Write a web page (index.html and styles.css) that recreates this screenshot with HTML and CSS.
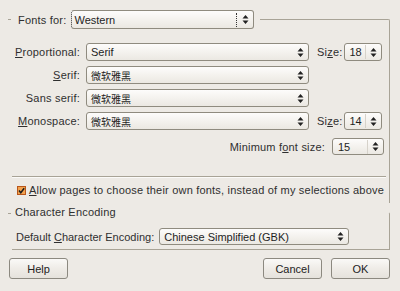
FILE: index.html
```html
<!DOCTYPE html>
<html lang="en">
<head>
    <meta charset="UTF-8">
    <title>Fonts</title>
    <link rel="stylesheet" href="styles.css">
</head>
<body>

    <div class="dialog">
        <div class="frame">
            <div class="frame-head">
                <span class="tick"></span>
                <span class="head-label">Fonts for:</span>
                <div class="combo combo-western">
                    <span class="combo-text">Western</span>
                    <span class="focus-line"></span>
                    <svg class="arrows" width="7" height="9" viewBox="0 0 7 9"><path d="M3.5 0L6.5 3.5H0.5Z M3.5 9L6.5 5.5H0.5Z" fill="#222"/></svg>
                </div>
                <span class="head-line"></span>
            </div>
            <div class="frame-body">
                <div class="rows">
                    <div class="row">
                        <span class="lbl"><u>P</u>roportional:</span>
                        <div class="combo wide"><span class="combo-text">Serif</span><svg class="arrows" width="7" height="9" viewBox="0 0 7 9"><path d="M3.5 0L6.5 3.5H0.5Z M3.5 9L6.5 5.5H0.5Z" fill="#222"/></svg></div>
                        <span class="size-lbl">Si<u>z</u>e:</span>
                        <div class="combo size"><span class="combo-text">18</span><span class="sep-v"></span><svg class="arrows" width="7" height="9" viewBox="0 0 7 9"><path d="M3.5 0L6.5 3.5H0.5Z M3.5 9L6.5 5.5H0.5Z" fill="#222"/></svg></div>
                    </div>
                    <div class="row">
                        <span class="lbl"><u>S</u>erif:</span>
                        <div class="combo wide"><span class="combo-text cjk">微软雅黑</span><svg class="arrows" width="7" height="9" viewBox="0 0 7 9"><path d="M3.5 0L6.5 3.5H0.5Z M3.5 9L6.5 5.5H0.5Z" fill="#222"/></svg></div>
                    </div>
                    <div class="row">
                        <span class="lbl">Sans serif:</span>
                        <div class="combo wide"><span class="combo-text cjk">微软雅黑</span><svg class="arrows" width="7" height="9" viewBox="0 0 7 9"><path d="M3.5 0L6.5 3.5H0.5Z M3.5 9L6.5 5.5H0.5Z" fill="#222"/></svg></div>
                    </div>
                    <div class="row">
                        <span class="lbl"><u>M</u>onospace:</span>
                        <div class="combo wide"><span class="combo-text cjk">微软雅黑</span><svg class="arrows" width="7" height="9" viewBox="0 0 7 9"><path d="M3.5 0L6.5 3.5H0.5Z M3.5 9L6.5 5.5H0.5Z" fill="#222"/></svg></div>
                        <span class="size-lbl">Si<u>z</u>e:</span>
                        <div class="combo size"><span class="combo-text">14</span><span class="sep-v"></span><svg class="arrows" width="7" height="9" viewBox="0 0 7 9"><path d="M3.5 0L6.5 3.5H0.5Z M3.5 9L6.5 5.5H0.5Z" fill="#222"/></svg></div>
                    </div>
                </div>

                <div class="min-row">
                    <span class="min-lbl">Minimum f<u>o</u>nt size:</span>
                    <div class="combo min"><span class="combo-text">15</span><span class="sep-v"></span><svg class="arrows" width="7" height="9" viewBox="0 0 7 9"><path d="M3.5 0L6.5 3.5H0.5Z M3.5 9L6.5 5.5H0.5Z" fill="#222"/></svg></div>
                </div>

                <div class="sep"></div>

                <div class="check-row">
                    <svg class="check" width="9" height="9" viewBox="0 0 9 9">
                        <rect x="0.5" y="0.5" width="8" height="8" fill="#f2a24e" stroke="#b8561a"/>
                        <path d="M2 4.5L3.8 6.8L7.2 2.2" fill="none" stroke="#1c1c1c" stroke-width="1.5"/>
                    </svg>
                    <span><u>A</u>llow pages to choose their own fonts, instead of my selections above</span>
                </div>
            </div>
        </div>

        <div class="frame encoding">
            <div class="frame-head small-head">
                <span class="tick"></span>
                <span class="head-label">Character Encoding</span>
                <span class="head-line plain"></span>
            </div>
            <div class="frame-body enc-body">
                <div class="enc-row">
                    <span class="enc-lbl">Default <u>C</u>haracter Encoding:</span>
                    <div class="combo enc"><span class="combo-text">Chinese Simplified (GBK)</span><svg class="arrows" width="7" height="9" viewBox="0 0 7 9"><path d="M3.5 0L6.5 3.5H0.5Z M3.5 9L6.5 5.5H0.5Z" fill="#222"/></svg></div>
                </div>
            </div>
        </div>

        <div class="buttons">
            <button class="btn">Help</button>
            <div class="right-btns">
                <button class="btn">Cancel</button>
                <button class="btn">OK</button>
            </div>
        </div>
    </div>

</body>
</html>
```

FILE: styles.css
```css
* {
    box-sizing: border-box;
    margin: 0;
    padding: 0;
}

body {
    background: #edeae5;
    font-family: "Liberation Sans", Arial, sans-serif;
    font-size: 11px;
    letter-spacing: 0.2px;
    color: #2f2f2f;
    width: 400px;
    height: 291px;
    overflow: hidden;
}

.dialog {
    padding: 10px 10px 0 8px;
}

u {
    text-decoration: underline;
    text-underline-offset: 1px;
}

/* frames */

.frame-head {
    display: flex;
    align-items: center;
    height: 19px;
}

.tick {
    width: 3px;
    border-top: 1px solid #a8a396;
    align-self: flex-start;
    margin-top: 9px;
}

.head-label {
    margin-left: 7px;
    margin-right: 5px;
}

.head-line {
    flex: 1;
    align-self: stretch;
    margin-top: 9px;
    margin-left: 6px;
    border-top: 1px solid #a8a396;
    border-right: 1px solid #a8a396;
    border-top-right-radius: 2px;
}

.head-line.plain {
    border-top-color: transparent;
    margin-left: 0;
}

.frame-body {
    border-right: 1px solid #a8a396;
    padding: 14px 0 6px 0;
}

/* combos */

.combo {
    display: flex;
    align-items: center;
    height: 18px;
    border: 1px solid #8f8b7f;
    border-radius: 3px;
    background: linear-gradient(#fdfcfb, #f4f2ee 50%, #ebe8e2);
    padding: 0 4px 0 4px;
    color: #1e1e1e;
    letter-spacing: 0;
}

.combo-text {
    flex: 1;
    white-space: nowrap;
}

.cjk {
    font-family: "Noto Sans CJK SC", sans-serif;
    font-size: 10px;
}

.arrows {
    flex: none;
}

.focus-line {
    height: 14px;
    border-left: 1px dotted #333;
    margin-right: 5px;
}

.sep-v {
    height: 14px;
    border-left: 1px solid #d6d2ca;
    margin-right: 4px;
}

.combo-western {
    width: 183px;
    height: 19px;
    padding-left: 2px;
    border-left: 1px dotted #333;
}

.rows {
    display: flex;
    flex-direction: column;
    gap: 5px;
}

.row {
    display: flex;
    align-items: center;
}

.lbl {
    width: 72px;
    text-align: right;
    margin-right: 6px;
}

.wide {
    width: 223px;
}

.size-lbl {
    margin-left: 8px;
    margin-right: 2px;
}

.size {
    width: 38px;
}

.min-row {
    display: flex;
    justify-content: flex-end;
    align-items: center;
    margin-top: 8px;
    padding-right: 5px;
}

.min-lbl {
    margin-right: 7px;
}

.min {
    width: 52px;
    height: 17px;
    padding-left: 5px;
}

.sep {
    border-top: 1px solid #a8a396;
    border-bottom: 1px solid #fbfaf8;
    margin: 21px 3px 0 4px;
}

.check-row {
    display: flex;
    align-items: center;
    gap: 3px;
    margin-top: 5px;
    padding-left: 9px;
    height: 14px;
}

/* encoding */

.encoding {
    margin-top: 3px;
}

.small-head {
    height: 12px;
}

.small-head .tick {
    margin-top: 7px;
}

.small-head .head-line {
    margin-top: 6px;
}

.small-head .head-label {
    margin-left: 4px;
}

.enc-body {
    border-bottom: 1px solid #a8a396;
    margin-left: 4px;
    padding: 10px 0 4px 4px;
}

.enc-row {
    display: flex;
    align-items: center;
}

.enc-lbl {
    white-space: nowrap;
    letter-spacing: 0;
    margin-right: 5px;
}

.enc {
    width: 190px;
    height: 17px;
}

/* buttons */

.buttons {
    display: flex;
    justify-content: space-between;
    margin-top: 8px;
    padding-left: 1px;
}

.right-btns {
    display: flex;
    gap: 9px;
}

.btn {
    width: 59px;
    height: 21px;
    border: 1px solid #8c8980;
    border-radius: 3px;
    background: linear-gradient(#faf9f7, #efece7 50%, #e5e2dc);
    font-family: "Liberation Sans", Arial, sans-serif;
    font-size: 11px;
    color: #222;
}
```
